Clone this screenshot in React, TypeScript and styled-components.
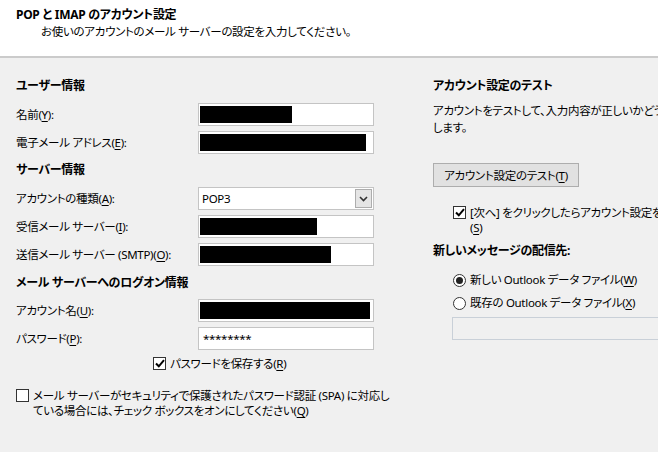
import styled, { createGlobalStyle } from 'styled-components';

const GlobalStyle = createGlobalStyle`
    html, body {
        margin: 0;
        padding: 0;
        background: #f0f0f0;
    }
    body {
        font-family: "Noto Sans", "Noto Sans CJK JP", sans-serif;
        font-size: 11.5px;
        letter-spacing: -0.3px;
        color: #000;
    }
`;

const Window = styled.div`
    width: 658px;
    height: 452px;
    overflow: hidden;
    background: #f0f0f0;
    display: flex;
    flex-direction: column;
    font-feature-settings: "palt";
`;

const Header = styled.header`
    height: 58px;
    box-sizing: border-box;
    background: #ffffff;
    border-bottom: 2px solid #cbcbcb;
    padding: 7px 0 0 16px;
`;

const Title = styled.h1`
    margin: 0;
    font-size: 12px;
    font-weight: bold;
    line-height: 16px;
`;

const Subtitle = styled.p`
    margin: 1px 0 0 25px;
    line-height: 16px;
`;

const Body = styled.main`
    display: flex;
    padding: 20px 0 0 16px;
`;

const LeftColumn = styled.section`
    width: 358px;
    flex: none;
    display: flex;
    flex-direction: column;
`;

const RightColumn = styled.section`
    width: 300px;
    flex: none;
    margin-left: 59px;
    display: flex;
    flex-direction: column;
`;

const Heading = styled.h2<{ $top?: number; $bottom?: number }>`
    margin: ${(p) => p.$top ?? 0}px 0 ${(p) => p.$bottom ?? 9}px 0;
    font-size: 12px;
    font-weight: bold;
    line-height: 16px;
    white-space: nowrap;
`;

const FormGrid = styled.div`
    display: grid;
    grid-template-columns: 182px 176px;
    grid-auto-rows: 23px;
    row-gap: 5px;
    align-items: center;
`;

const Label = styled.label`
    line-height: 16px;
    white-space: nowrap;
`;

const Key = styled.u`
    text-decoration: underline;
    text-underline-offset: 2px;
`;

const Field = styled.div`
    height: 23px;
    box-sizing: border-box;
    border: 1px solid #c4c4c4;
    background: #ffffff;
    padding: 2px 1px;
    display: flex;
    align-items: center;
`;

const Redacted = styled.span<{ $width: number }>`
    display: block;
    height: 100%;
    width: ${(p) => p.$width}px;
    background: #000;
`;

const FieldText = styled.span`
    padding-left: 3px;
    line-height: 16px;
`;

const SelectBox = styled(Field)`
    justify-content: space-between;
    padding: 1px 1px 1px 0;
`;

const DropButton = styled.span`
    width: 17px;
    height: 19px;
    box-sizing: border-box;
    border: 1px solid #adadad;
    background: #e5e5e5;
    display: flex;
    align-items: center;
    justify-content: center;
`;

const CheckRow = styled.div<{ $indent: number; $top: number }>`
    display: flex;
    align-items: flex-start;
    gap: 4px;
    margin: ${(p) => p.$top}px 0 0 ${(p) => p.$indent}px;
    line-height: 15px;
    white-space: nowrap;
`;

const Box = styled.span`
    width: 13px;
    height: 13px;
    margin-top: 1px;
    flex: none;
    box-sizing: border-box;
    border: 1px solid #333333;
    background: #ffffff;
    display: flex;
    align-items: center;
    justify-content: center;
`;

const Description = styled.p`
    margin: 8px 0 0 0;
    line-height: 17px;
    white-space: nowrap;
`;

const Button = styled.button`
    margin-top: 27px;
    width: 146px;
    height: 24px;
    box-sizing: border-box;
    border: 1px solid #adadad;
    background: #e1e1e1;
    font: inherit;
    letter-spacing: inherit;
    color: #000;
    padding: 0;
`;

const RadioRow = styled.div<{ $top: number }>`
    display: flex;
    align-items: center;
    gap: 4px;
    margin: ${(p) => p.$top}px 0 0 20px;
    line-height: 16px;
    white-space: nowrap;
`;

const Radio = styled.span<{ $on?: boolean }>`
    width: 13px;
    height: 13px;
    flex: none;
    box-sizing: border-box;
    border-radius: 50%;
    border: 1px solid #333333;
    background: #ffffff;
    display: flex;
    align-items: center;
    justify-content: center;
    &::after {
        content: '';
        width: 7px;
        height: 7px;
        border-radius: 50%;
        background: ${(p) => (p.$on ? '#222222' : 'transparent')};
    }
`;

const DisabledField = styled.div`
    margin: 6px 0 0 19px;
    height: 23px;
    box-sizing: border-box;
    border: 1px solid #c9d0d8;
    background: #f0f0f0;
`;

const Check = ({ on }: { on?: boolean }) => (
    <Box>
        {on && (
            <svg width="10" height="9" viewBox="0 0 10 9">
                <path d="M1 4.5 L3.8 7.3 L9 1.2" fill="none" stroke="#000" strokeWidth="2" />
            </svg>
        )}
    </Box>
);

export default function App() {
    return (
        <Window>
            <GlobalStyle />
            <Header>
                <Title>POP と IMAP のアカウント設定</Title>
                <Subtitle>お使いのアカウントのメール サーバーの設定を入力してください。</Subtitle>
            </Header>
            <Body>
                <LeftColumn>
                    <Heading>ユーザー情報</Heading>
                    <FormGrid>
                        <Label>名前(<Key>Y</Key>):</Label>
                        <Field><Redacted $width={92} /></Field>
                        <Label>電子メール アドレス(<Key>E</Key>):</Label>
                        <Field><Redacted $width={166} /></Field>
                    </FormGrid>

                    <Heading $top={8}>サーバー情報</Heading>
                    <FormGrid>
                        <Label>アカウントの種類(<Key>A</Key>):</Label>
                        <SelectBox>
                            <FieldText>POP3</FieldText>
                            <DropButton>
                                <svg width="9" height="6" viewBox="0 0 9 6">
                                    <path d="M1 1 L4.5 4.5 L8 1" fill="none" stroke="#333" strokeWidth="1.6" />
                                </svg>
                            </DropButton>
                        </SelectBox>
                        <Label>受信メール サーバー(<Key>I</Key>):</Label>
                        <Field><Redacted $width={117} /></Field>
                        <Label>送信メール サーバー (SMTP)(<Key>O</Key>):</Label>
                        <Field><Redacted $width={131} /></Field>
                    </FormGrid>

                    <Heading $top={9} $bottom={8}>メール サーバーへのログオン情報</Heading>
                    <FormGrid>
                        <Label>アカウント名(<Key>U</Key>):</Label>
                        <Field><Redacted $width={170} /></Field>
                        <Label>パスワード(<Key>P</Key>):</Label>
                        <Field><FieldText>********</FieldText></Field>
                    </FormGrid>

                    <CheckRow $indent={137} $top={6}>
                        <Check on />
                        <span>パスワードを保存する(<Key>R</Key>)</span>
                    </CheckRow>

                    <CheckRow $indent={0} $top={17}>
                        <Check />
                        <span>
                            メール サーバーがセキュリティで保護されたパスワード認証 (SPA) に対応し
                            <br />
                            ている場合には、チェック ボックスをオンにしてください(<Key>Q</Key>)
                        </span>
                    </CheckRow>
                </LeftColumn>

                <RightColumn>
                    <Heading $bottom={0}>アカウント設定のテスト</Heading>
                    <Description>
                        アカウントをテストして、入力内容が正しいかどうかを確認することをお勧め
                        <br />
                        します。
                    </Description>
                    <Button>アカウント設定のテスト(<Key>T</Key>)</Button>

                    <CheckRow $indent={20} $top={18}>
                        <Check on />
                        <span>
                            [次へ] をクリックしたらアカウント設定を自動的にテストする
                            <br />
                            (<Key>S</Key>)
                        </span>
                    </CheckRow>

                    <Heading $top={8} $bottom={0}>新しいメッセージの配信先:</Heading>
                    <RadioRow $top={13}>
                        <Radio $on />
                        <span>新しい Outlook データ ファイル(<Key>W</Key>)</span>
                    </RadioRow>
                    <RadioRow $top={7}>
                        <Radio />
                        <span>既存の Outlook データ ファイル(<Key>X</Key>)</span>
                    </RadioRow>
                    <DisabledField />
                </RightColumn>
            </Body>
        </Window>
    );
}
